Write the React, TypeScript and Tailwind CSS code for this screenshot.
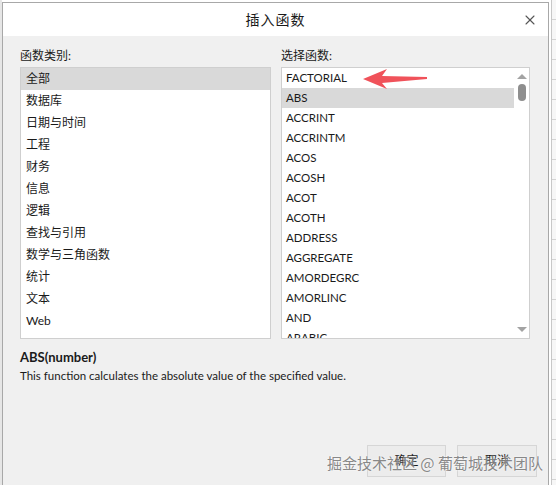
import { X } from 'lucide-react';

const categories = ['全部', '数据库', '日期与时间', '工程', '财务', '信息', '逻辑', '查找与引用', '数学与三角函数', '统计', '文本', 'Web'];

const functions = ['FACTORIAL', 'ABS', 'ACCRINT', 'ACCRINTM', 'ACOS', 'ACOSH', 'ACOT', 'ACOTH', 'ADDRESS', 'AGGREGATE', 'AMORDEGRC', 'AMORLINC', 'AND', 'ARABIC'];

export default function App() {
  return (
    <div className="w-[556px] h-[485px] overflow-hidden bg-white flex text-[#1a1a1a] font-['Lato','Noto_Sans_CJK_SC',sans-serif]">
      {/* sheet behind, left edge */}
      <div className="w-[2px] shrink-0 bg-[#e6e6e6]" />

      {/* Dialog */}
      <div className="relative w-[547px] shrink-0 mt-[2px] h-[490px] flex flex-col bg-[#f0f0f0] border-x border-t border-[#a8a8a8]">
        {/* Header */}
        <div className="h-[33px] shrink-0 bg-white flex items-center justify-center relative">
          <span className="text-[14px] tracking-[1px] font-['Noto_Sans_CJK_SC',sans-serif]">插入函数</span>
          <X className="absolute right-[10px] top-[9px] w-[16px] h-[16px] text-[#555]" strokeWidth={1.6} />
        </div>

        {/* Body */}
        <div className="flex gap-[10px] pl-[17px] pt-[10px]">
          {/* Categories */}
          <div className="flex flex-col w-[251px]">
            <div className="text-[12px] leading-[20px] h-[20px] mb-[1px]">函数类别:</div>
            <div className="h-[272px] bg-white border border-[#cfcfcf] flex flex-col">
              {categories.map((c, i) => (
                <div
                  key={c}
                  className={`h-[22px] leading-[22px] px-[5px] text-[12px] ${i === 0 ? 'bg-[#d9d9d9]' : ''}`}
                >
                  {c}
                </div>
              ))}
            </div>
          </div>

          {/* Functions */}
          <div className="flex flex-col w-[249px]">
            <div className="text-[12px] leading-[20px] h-[20px] mb-[1px]">选择函数:</div>
            <div className="h-[272px] bg-white border border-[#cfcfcf] flex overflow-hidden">
              <div className="flex-1 flex flex-col">
                {functions.map((f, i) => (
                  <div
                    key={f}
                    className={`h-[20px] shrink-0 leading-[20px] px-[4px] text-[11.5px] ${i === 1 ? 'bg-[#d9d9d9]' : ''}`}
                  >
                    {f}
                  </div>
                ))}
              </div>
              {/* scrollbar */}
              <div className="w-[15px] shrink-0 flex flex-col items-center pt-[6px] pb-[6px]">
                <div className="w-0 h-0 border-x-[5px] border-x-transparent border-b-[5px] border-b-[#a3a3a3]" />
                <div className="mt-[5px] w-[8px] h-[17px] rounded-full bg-[#8e8e8e]" />
                <div className="flex-1" />
                <div className="w-0 h-0 border-x-[5px] border-x-transparent border-t-[5px] border-t-[#a3a3a3]" />
              </div>
            </div>
          </div>
        </div>

        {/* Description */}
        <div className="pl-[17px] pt-[9px]">
          <div className="text-[13px] font-bold leading-[18px]">ABS(number)</div>
          <div className="text-[11.5px] leading-[20px]">This function calculates the absolute value of the specified value.</div>
        </div>

        {/* Buttons */}
        <div className="flex justify-end gap-[11px] pr-[11px] mt-[59px]">
          <button className="w-[79px] h-[32px] bg-[#ececec] border border-[#d6d6d6] text-[12px]">确定</button>
          <button className="w-[80px] h-[32px] bg-[#ececec] border border-[#d6d6d6] text-[12px]">取消</button>
        </div>

        {/* Red arrow annotation */}
        <svg className="absolute left-[357px] top-[62px]" width="72" height="28" viewBox="360 65 72 28">
          <polygon points="363,79 387,69 382,76 427,77 427,79 382,83 387,89" fill="#f0525a" />
        </svg>

        {/* Watermark */}
        <div className="absolute left-[324px] top-[449px] text-[15px] leading-[22px] text-[#6a6a6a]/80 whitespace-nowrap [text-shadow:0_0_2px_#fff] font-['Noto_Sans_CJK_SC',sans-serif]">
          掘金技术社区 @ 葡萄城技术团队
        </div>
      </div>

      {/* sheet behind, right edge */}
      <div className="flex-1 ml-[2px] border-l border-[#c8c8c8] bg-[repeating-linear-gradient(to_bottom,#f7f7f7_0,#f7f7f7_19px,#d4d4d4_19px,#d4d4d4_20px)]" />
    </div>
  );
}
